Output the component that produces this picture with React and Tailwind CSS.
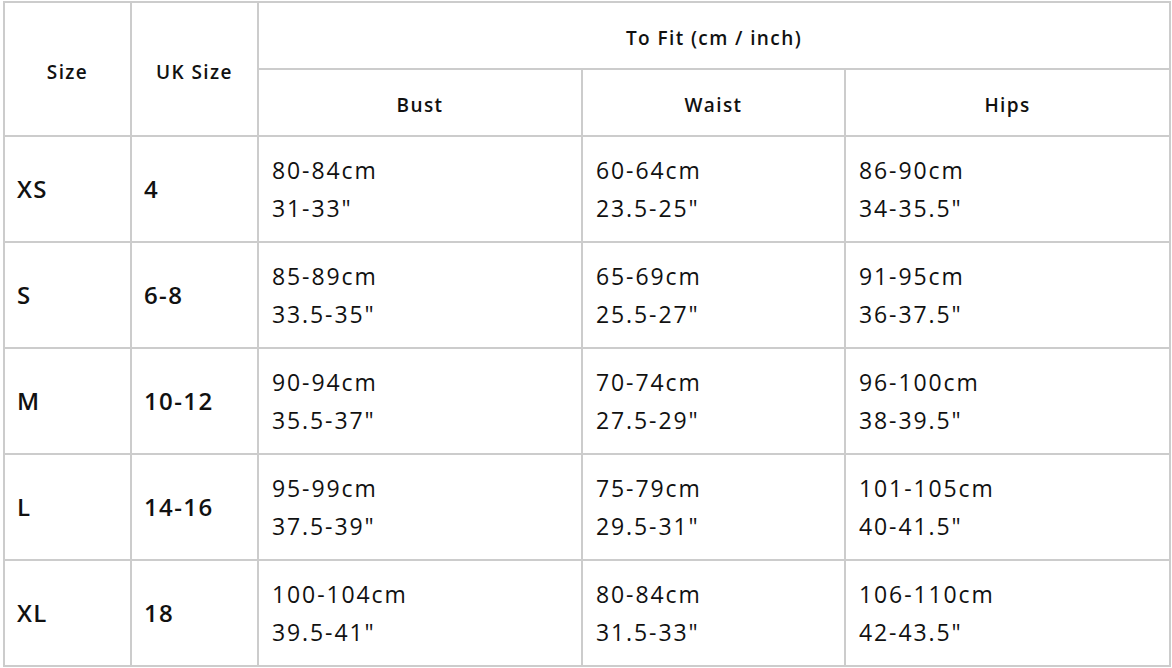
import React from 'react';

const ROWS = [
  { size: 'XS', uk: '4', bust: ['80-84cm', '31-33"'], waist: ['60-64cm', '23.5-25"'], hips: ['86-90cm', '34-35.5"'] },
  { size: 'S', uk: '6-8', bust: ['85-89cm', '33.5-35"'], waist: ['65-69cm', '25.5-27"'], hips: ['91-95cm', '36-37.5"'] },
  { size: 'M', uk: '10-12', bust: ['90-94cm', '35.5-37"'], waist: ['70-74cm', '27.5-29"'], hips: ['96-100cm', '38-39.5"'] },
  { size: 'L', uk: '14-16', bust: ['95-99cm', '37.5-39"'], waist: ['75-79cm', '29.5-31"'], hips: ['101-105cm', '40-41.5"'] },
  { size: 'XL', uk: '18', bust: ['100-104cm', '39.5-41"'], waist: ['80-84cm', '31.5-33"'], hips: ['106-110cm', '42-43.5"'] },
];

const th = 'border-2 border-[#cccccc] pt-[6px] font-semibold text-[19px] tracking-[1.4px] text-center align-middle';

const Measure = ({ lines }) => (
  <td className="border-2 border-[#cccccc] px-[13px] pb-[1px] align-middle text-[23px] tracking-[1.9px] leading-[38px]">
    <div>{lines[0]}</div>
    <div>{lines[1]}</div>
  </td>
);

export default function App() {
  return (
    <div className="bg-white w-[1172px] h-[668px] pl-[3px] pt-[1px] text-[#111111]" style={{ fontFamily: '"Open Sans", "Noto Sans", sans-serif' }}>
      <table className="table-fixed border-collapse w-[1166px]">
        <colgroup>
          <col className="w-[127px]" />
          <col className="w-[127px]" />
          <col className="w-[324px]" />
          <col className="w-[263px]" />
          <col className="w-[325px]" />
        </colgroup>
        <thead>
          <tr className="h-[67px]">
            <th rowSpan={2} className={th}>Size</th>
            <th rowSpan={2} className={th}>UK Size</th>
            <th colSpan={3} className={th}>To Fit (cm / inch)</th>
          </tr>
          <tr className="h-[67px]">
            <th className={th}>Bust</th>
            <th className={th}>Waist</th>
            <th className={th}>Hips</th>
          </tr>
        </thead>
        <tbody>
          {ROWS.map((r) => (
            <tr key={r.size} className="h-[106px]">
              <td className="border-2 border-[#cccccc] pl-[12px] align-middle text-[24px] font-semibold tracking-[1.4px]">{r.size}</td>
              <td className="border-2 border-[#cccccc] pl-[12px] align-middle text-[24px] font-semibold tracking-[1.4px]">{r.uk}</td>
              <Measure lines={r.bust} />
              <Measure lines={r.waist} />
              <Measure lines={r.hips} />
            </tr>
          ))}
        </tbody>
      </table>
    </div>
  );
}
